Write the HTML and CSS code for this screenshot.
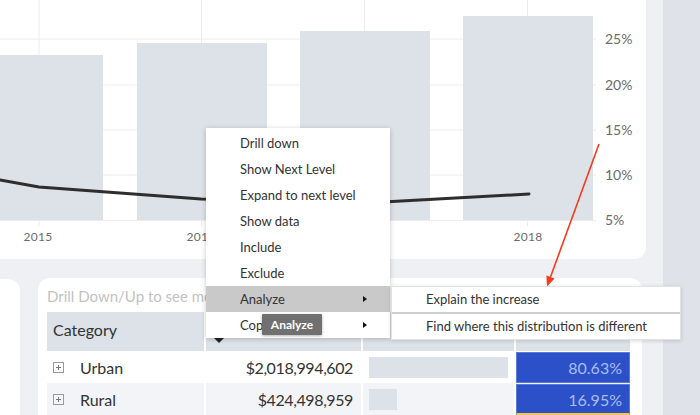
FILE: index.html
```html
<!DOCTYPE html>
<html lang="en">
<head>
<meta charset="utf-8">
<title>Report</title>
<link rel="stylesheet" href="styles.css">
</head>
<body>
<div class="page">
  <div class="main">
    <section class="chart-card">
      <svg class="chart" width="646" height="260" viewBox="0 0 646 260">
        <g class="grid">
          <line x1="0" y1="39" x2="596" y2="39"/>
          <line x1="0" y1="85" x2="596" y2="85"/>
          <line x1="0" y1="130" x2="596" y2="130"/>
          <line x1="0" y1="175" x2="596" y2="175"/>
          <line x1="0" y1="220.5" x2="596" y2="220.5"/>
          <line x1="39" y1="0" x2="39" y2="226"/>
          <line x1="201.5" y1="0" x2="201.5" y2="226"/>
          <line x1="364.5" y1="0" x2="364.5" y2="226"/>
          <line x1="527.5" y1="0" x2="527.5" y2="226"/>
        </g>
        <g class="bars">
          <rect x="-27" y="55" width="130" height="165"/>
          <rect x="137" y="43" width="130" height="177"/>
          <rect x="300" y="31" width="130" height="189"/>
          <rect x="463" y="16" width="130" height="204"/>
        </g>
        <polyline class="trend" points="0,180 39,187 201,199 365,203 529,194"/>
        <g class="years">
          <text x="38" y="241">2015</text>
          <text x="201" y="241">2016</text>
          <text x="365" y="241">2017</text>
          <text x="528" y="241">2018</text>
        </g>
        <g class="pct">
          <text x="605" y="44">25%</text>
          <text x="605" y="90">20%</text>
          <text x="605" y="135">15%</text>
          <text x="605" y="180">10%</text>
          <text x="605" y="225">5%</text>
        </g>
      </svg>
    </section>
    <div class="bottom">
      <div class="side-card"></div>
      <section class="table-card">
        <div class="table-title">Drill Down/Up to see more details</div>
        <div class="table">
          <div class="row head">
            <div class="cell c1">Category</div>
            <div class="cell c2"><span class="sort"></span></div>
            <div class="cell c3"></div>
            <div class="cell c4"></div>
          </div>
          <div class="row">
            <div class="cell c1"><span class="plus"></span>Urban</div>
            <div class="cell c2 num">$2,018,994,602</div>
            <div class="cell c3"><span class="bar" style="width:139px"></span></div>
            <div class="cell c4 pctcell">80.63%</div>
          </div>
          <div class="row alt">
            <div class="cell c1"><span class="plus"></span>Rural</div>
            <div class="cell c2 num">$424,498,959</div>
            <div class="cell c3"><span class="bar" style="width:28px"></span></div>
            <div class="cell c4 pctcell last">16.95%</div>
          </div>
        </div>
      </section>
    </div>
  </div>
  <div class="rail"></div>
</div>

<div class="menu">
  <div class="item">Drill down</div>
  <div class="item">Show Next Level</div>
  <div class="item">Expand to next level</div>
  <div class="item">Show data</div>
  <div class="item">Include</div>
  <div class="item">Exclude</div>
  <div class="item active">Analyze<span class="caret"></span></div>
  <div class="item">Copy<span class="caret"></span></div>
</div>

<div class="tooltip">Analyze</div>

<div class="submenu">
  <div class="sub-item">Explain the increase</div>
  <div class="sub-item">Find where this distribution is different</div>
</div>

<svg class="arrow" width="700" height="415" viewBox="0 0 700 415">
  <line x1="599" y1="144" x2="550.5" y2="277"/>
  <polygon points="554.6,278.4 546.4,275.4 547,286.5"/>
</svg>
</body>
</html>
```

FILE: styles.css
```css
html, body {
  margin: 0;
  padding: 0;
}
body {
  width: 700px;
  height: 415px;
  overflow: hidden;
  position: relative;
  background: #eef0f4;
  font-family: Lato, "Noto Sans", sans-serif;
  color: #333;
}
.page {
  display: flex;
  height: 415px;
}
.main {
  width: 663px;
  display: flex;
  flex-direction: column;
  gap: 19px;
}
.rail {
  flex: 1;
  background: #dfe2e8;
}
.chart-card {
  height: 260px;
  margin-right: 17px;
  background: #fff;
  border-radius: 0 0 12px 0;
  overflow: hidden;
}
.chart {
  display: block;
}
.grid line {
  stroke: #ececee;
  stroke-width: 1;
}
.bars rect {
  fill: #dde1e8;
}
.trend {
  fill: none;
  stroke: #2e2e2e;
  stroke-width: 3;
  stroke-linecap: round;
  stroke-linejoin: round;
}
.years text {
  font-size: 12px;
  fill: #6b6b6b;
  text-anchor: middle;
  letter-spacing: 0.3px;
}
.pct text {
  font-size: 14px;
  fill: #6b6b6b;
}
.bottom {
  flex: 1;
  display: flex;
  gap: 18px;
}
.side-card {
  width: 20px;
  margin-top: 1px;
  background: #fff;
  border-radius: 0 12px 0 0;
}
.table-card {
  width: 583px;
  padding: 6px 12px 0 9px;
  background: #fff;
  border-radius: 12px 12px 0 0;
}
.table-title {
  height: 28px;
  line-height: 25px;
  font-size: 15px;
  color: #c2c2c2;
  white-space: nowrap;
}
.row {
  display: flex;
  height: 32px;
}
.row.head {
  height: 39px;
  background: #dde1e8;
}
.row.alt {
  background: #f3f4f7;
}
.cell {
  box-sizing: border-box;
  border-right: 2px solid #fff;
  display: flex;
  align-items: center;
  font-size: 16px;
  white-space: nowrap;
}
.c1 { width: 159px; padding-left: 6px; }
.c2 { width: 157px; }
.c3 { width: 153px; padding-left: 6px; }
.c4 { width: 114px; border-right: none; }
.head .c1 { padding-bottom: 4px; }
.head .c2 {
  align-items: flex-end;
  padding-left: 8px;
  padding-bottom: 8px;
}
.sort {
  width: 0;
  height: 0;
  border-left: 5px solid transparent;
  border-right: 5px solid transparent;
  border-top: 5px solid #222;
}
.num {
  justify-content: flex-end;
  padding-right: 8px;
  letter-spacing: -0.4px;
}
.plus {
  width: 11px;
  height: 11px;
  box-sizing: border-box;
  border: 1px solid #9a9a9a;
  margin-right: 16px;
  position: relative;
}
.plus::before, .plus::after {
  content: "";
  position: absolute;
  background: #777;
}
.plus::before { left: 2px; right: 2px; top: 4px; height: 1px; }
.plus::after { top: 2px; bottom: 2px; left: 4px; width: 1px; }
.bar {
  display: block;
  height: 21px;
  background: #dde1e8;
}
.pctcell {
  justify-content: flex-end;
  padding-right: 7px;
  background: #2b50c8;
  color: #a9bdf0;
  border: 1px solid #5a7ad8;
  border-top-width: 1px;
  margin-top: 1px;
}
.pctcell.last {
  border-bottom: 2px solid #f0c94a;
}

/* overlays */
.menu {
  position: absolute;
  left: 206px;
  top: 128px;
  width: 184px;
  padding-top: 2px;
  background: #fff;
  box-shadow: 0 1px 5px rgba(0, 0, 0, 0.22);
  font-size: 13px;
  color: #333;
}
.item {
  height: 26px;
  line-height: 26px;
  padding-left: 34px;
  position: relative;
}
.item.active {
  background: #c9c9c9;
}
.caret {
  position: absolute;
  left: 157px;
  top: 10px;
  width: 0;
  height: 0;
  border-top: 3.5px solid transparent;
  border-bottom: 3.5px solid transparent;
  border-left: 4px solid #111;
}
.tooltip {
  position: absolute;
  left: 262px;
  top: 314px;
  width: 60px;
  height: 21px;
  line-height: 21px;
  text-align: center;
  background: #707070;
  color: #fff;
  font-size: 12px;
  font-weight: 700;
  border-radius: 1px;
  box-shadow: 0 1px 3px rgba(0, 0, 0, 0.3);
}
.submenu {
  position: absolute;
  left: 391px;
  top: 286px;
  width: 288px;
  background: #fff;
  border: 1px solid #e2e2e2;
  box-shadow: 0 1px 4px rgba(0, 0, 0, 0.15);
  font-size: 13px;
  color: #333;
}
.sub-item {
  height: 25px;
  line-height: 25px;
  padding-left: 34px;
}
.sub-item + .sub-item {
  border-top: 2px solid #cfcfcf;
}
.arrow {
  position: absolute;
  left: 0;
  top: 0;
  pointer-events: none;
}
.arrow line {
  stroke: #f23d1c;
  stroke-width: 1.6;
}
.arrow polygon {
  fill: #f23d1c;
}
```
